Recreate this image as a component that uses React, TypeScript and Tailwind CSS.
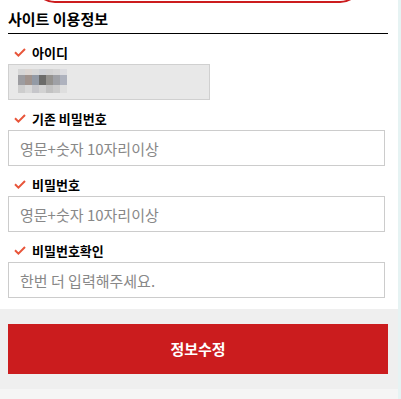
import React from 'react';

const mosaic = [
  ['#d6d6d6', '#dcd6d2', '#d8d8d8', '#d0d2d6', '#d2d2d2', '#d6d6d6', '#dcdce0'],
  ['#9c9ca0', '#a0938d', '#939aa5', '#6c6c6a', '#94928e', '#9fa1a6', '#aeb2be'],
  ['#cdcdcd', '#d8d8d8', '#c6c6ca', '#d2d2d2', '#c2c2c2', '#cbcbcb', '#dedede'],
];

function Check() {
  return (
    <svg width="12" height="9" viewBox="0 0 12 9" className="shrink-0">
      <polyline points="1,4.2 4.4,7.6 11,1" fill="none" stroke="#e8553a" strokeWidth="2" />
    </svg>
  );
}

function Label({ text }: { text: string }) {
  return (
    <div className="h-[20px] pb-[4px] flex items-center gap-[6px] pl-[6px]">
      <Check />
      <span className="text-[13px] font-bold text-black leading-none">{text}</span>
    </div>
  );
}

function Field({ placeholder }: { placeholder: string }) {
  return (
    <input
      type="password"
      placeholder={placeholder}
      className="w-[377px] h-[36px] border border-[#cccccc] bg-white px-[11px] text-[15px] text-[#333] placeholder:text-[#888888] outline-none"
    />
  );
}

export default function App() {
  return (
    <div className="flex w-[401px] min-h-[399px] overflow-hidden" style={{ fontFamily: '"Noto Sans CJK KR", "Noto Sans", sans-serif' }}>
      <div className="w-[398px] flex flex-col bg-white">
        <div className="pl-[8px] pr-[10px]">
          {/* top button edge */}
          <div className="ml-[25px] w-[329px] h-[44px] -mt-[41px] border-2 border-[#cc1c1e] rounded-full"></div>

          {/* title */}
          <div className="h-[31px] flex items-center border-b border-black">
            <h2 className="text-[15px] font-bold text-black leading-none">사이트 이용정보</h2>
          </div>

          <div className="pt-[10px] pb-[11px] flex flex-col">
            <Label text="아이디" />
            <div className="w-[202px] h-[36px] border border-[#d0d0d0] bg-[#e8e8e8] flex items-center pl-[9px]">
              <svg width="49" height="26" viewBox="0 0 49 26">
                {mosaic.map((row, r) =>
                  row.map((c, i) => (
                    <rect key={r + '-' + i} x={i * 7} y={r === 0 ? 0 : r === 1 ? 6 : 16} width="7" height={r === 0 ? 6 : r === 1 ? 10 : 8} fill={c} />
                  ))
                )}
              </svg>
            </div>

            <div className="mt-[10px]">
              <Label text="기존 비밀번호" />
              <Field placeholder="영문+숫자 10자리이상" />
            </div>
            <div className="mt-[10px]">
              <Label text="비밀번호" />
              <Field placeholder="영문+숫자 10자리이상" />
            </div>
            <div className="mt-[10px]">
              <Label text="비밀번호확인" />
              <Field placeholder="한번 더 입력해주세요." />
            </div>
          </div>
        </div>

        <div className="bg-[#efefef] pl-[8px] pr-[10px] py-[15px]">
          <button className="w-full h-[50px] bg-[#cb1c1e] text-white text-[15px] font-bold">정보수정</button>
        </div>
        <div className="flex-1 bg-[#f5f5f5]"></div>
      </div>
      <div className="w-[3px] bg-[#e6f3f3]"></div>
    </div>
  );
}
